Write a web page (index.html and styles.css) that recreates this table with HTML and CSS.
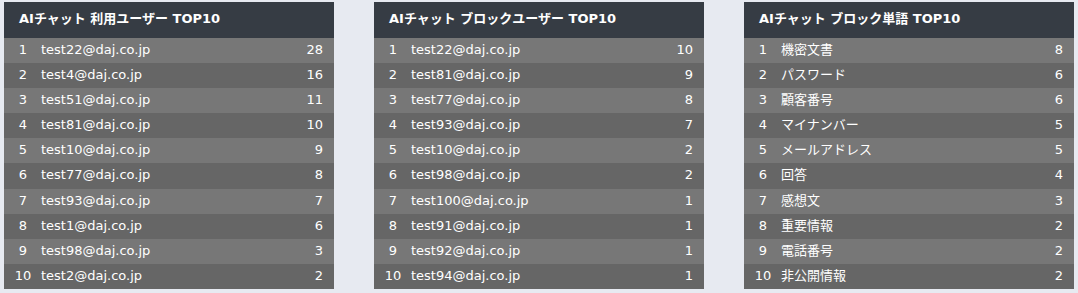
FILE: index.html
```html
<!DOCTYPE html>
<html lang="ja">
<head>
<meta charset="utf-8">
<link rel="stylesheet" href="styles.css">
</head>
<body>
<div class="boards">
  <section class="panel">
    <h2 class="panel-title">AIチャット 利用ユーザー TOP10</h2>
    <ol class="rank">
      <li class="row"><span class="no">1</span><span class="name">test22@daj.co.jp</span><span class="count">28</span></li>
      <li class="row"><span class="no">2</span><span class="name">test4@daj.co.jp</span><span class="count">16</span></li>
      <li class="row"><span class="no">3</span><span class="name">test51@daj.co.jp</span><span class="count">11</span></li>
      <li class="row"><span class="no">4</span><span class="name">test81@daj.co.jp</span><span class="count">10</span></li>
      <li class="row"><span class="no">5</span><span class="name">test10@daj.co.jp</span><span class="count">9</span></li>
      <li class="row"><span class="no">6</span><span class="name">test77@daj.co.jp</span><span class="count">8</span></li>
      <li class="row"><span class="no">7</span><span class="name">test93@daj.co.jp</span><span class="count">7</span></li>
      <li class="row"><span class="no">8</span><span class="name">test1@daj.co.jp</span><span class="count">6</span></li>
      <li class="row"><span class="no">9</span><span class="name">test98@daj.co.jp</span><span class="count">3</span></li>
      <li class="row"><span class="no">10</span><span class="name">test2@daj.co.jp</span><span class="count">2</span></li>
    </ol>
  </section>
  <section class="panel">
    <h2 class="panel-title">AIチャット ブロックユーザー TOP10</h2>
    <ol class="rank">
      <li class="row"><span class="no">1</span><span class="name">test22@daj.co.jp</span><span class="count">10</span></li>
      <li class="row"><span class="no">2</span><span class="name">test81@daj.co.jp</span><span class="count">9</span></li>
      <li class="row"><span class="no">3</span><span class="name">test77@daj.co.jp</span><span class="count">8</span></li>
      <li class="row"><span class="no">4</span><span class="name">test93@daj.co.jp</span><span class="count">7</span></li>
      <li class="row"><span class="no">5</span><span class="name">test10@daj.co.jp</span><span class="count">2</span></li>
      <li class="row"><span class="no">6</span><span class="name">test98@daj.co.jp</span><span class="count">2</span></li>
      <li class="row"><span class="no">7</span><span class="name">test100@daj.co.jp</span><span class="count">1</span></li>
      <li class="row"><span class="no">8</span><span class="name">test91@daj.co.jp</span><span class="count">1</span></li>
      <li class="row"><span class="no">9</span><span class="name">test92@daj.co.jp</span><span class="count">1</span></li>
      <li class="row"><span class="no">10</span><span class="name">test94@daj.co.jp</span><span class="count">1</span></li>
    </ol>
  </section>
  <section class="panel">
    <h2 class="panel-title">AIチャット ブロック単語 TOP10</h2>
    <ol class="rank">
      <li class="row"><span class="no">1</span><span class="name">機密文書</span><span class="count">8</span></li>
      <li class="row"><span class="no">2</span><span class="name">パスワード</span><span class="count">6</span></li>
      <li class="row"><span class="no">3</span><span class="name">顧客番号</span><span class="count">6</span></li>
      <li class="row"><span class="no">4</span><span class="name">マイナンバー</span><span class="count">5</span></li>
      <li class="row"><span class="no">5</span><span class="name">メールアドレス</span><span class="count">5</span></li>
      <li class="row"><span class="no">6</span><span class="name">回答</span><span class="count">4</span></li>
      <li class="row"><span class="no">7</span><span class="name">感想文</span><span class="count">3</span></li>
      <li class="row"><span class="no">8</span><span class="name">重要情報</span><span class="count">2</span></li>
      <li class="row"><span class="no">9</span><span class="name">電話番号</span><span class="count">2</span></li>
      <li class="row"><span class="no">10</span><span class="name">非公開情報</span><span class="count">2</span></li>
    </ol>
  </section>
</div>
</body>
</html>
```
FILE: styles.css
```css
html, body {
  margin: 0;
  padding: 0;
}
body {
  background: #e7eaf1;
  font-family: "DejaVu Sans", "Noto Sans CJK JP", sans-serif;
  color: #ffffff;
  height: 293px;
  overflow: hidden;
}
.boards {
  display: flex;
  gap: 40px;
  padding: 2px 4px 0 4px;
}
.panel {
  width: 330px;
  flex: 0 0 330px;
}
.panel-title {
  margin: 0;
  height: 36px;
  box-sizing: border-box;
  line-height: 34px;
  padding: 0 15px 2px 15px;
  background: #363c44;
  font-size: 13px;
  font-weight: bold;
  color: #ffffff;
  white-space: nowrap;
}
.rank {
  list-style: none;
  margin: 0;
  padding: 0;
}
.row {
  display: flex;
  height: 25.1px;
  box-sizing: border-box;
  line-height: 23px;
  font-size: 13px;
  padding: 0 11px 2px 9px;
  background: #777777;
}
.row:nth-child(even) {
  background: #666666;
}
.no {
  width: 20px;
  text-align: center;
  flex: 0 0 20px;
  margin-right: 8px;
}
.name {
  flex: 1;
}
.count {
  text-align: right;
}
```
